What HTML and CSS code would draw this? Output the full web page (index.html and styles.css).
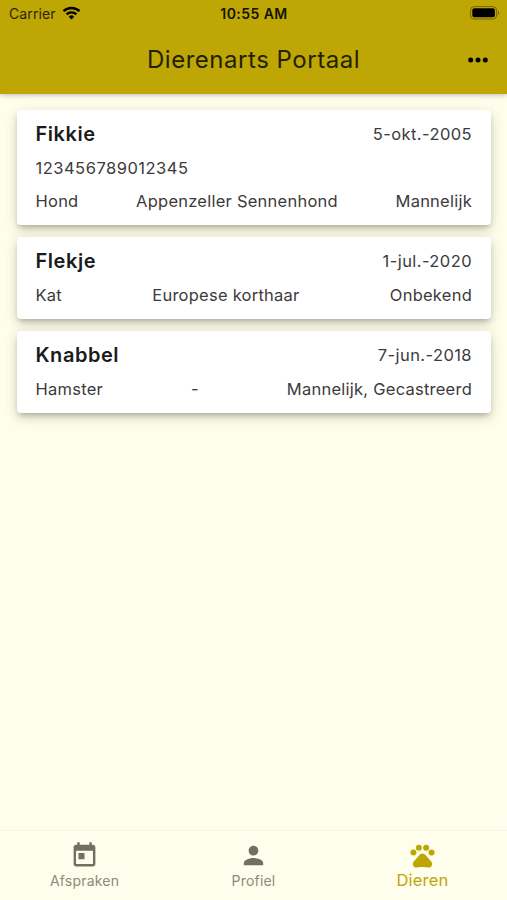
FILE: index.html
```
<!DOCTYPE html>
<html lang="nl">
<head>
<meta charset="utf-8">
<meta name="viewport" content="width=device-width">
<title>Dierenarts Portaal</title>
<link rel="stylesheet" href="styles.css">
</head>
<body>
<div class="app">
  <header class="header">
    <div class="status">
      <div class="carrier"><span>Carrier</span>
        <svg class="wifi" viewBox="0 0 18 14" fill="none" stroke="#000"><path d="M1 5.2a11.5 11.5 0 0 1 16 0" stroke-width="2.5"/><path d="M4.1 8.4a7 7 0 0 1 9.8 0" stroke-width="2.4"/><path d="M9 13.4 6.3 10.7a3.8 3.8 0 0 1 5.4 0z" fill="#000" stroke="none"/></svg>
      </div>
      <div class="clock">10:55 AM</div>
      <svg class="battery" viewBox="0 0 30 14"><rect x=".6" y=".6" width="26" height="12.4" rx="3.6" fill="none" stroke="#000" stroke-opacity=".38"/><rect x="2.3" y="2.3" width="22.6" height="9" rx="2" /><path d="M28 4.6q2 2.2 0 4.4z" fill-opacity=".45"/></svg>
    </div>
    <div class="toolbar">
      <h1 class="title">Dierenarts Portaal</h1>
      <svg class="more" viewBox="0 0 20 6"><circle cx="2.7" cy="3" r="2.5"/><circle cx="10" cy="3" r="2.5"/><circle cx="17.3" cy="3" r="2.5"/></svg>
    </div>
  </header>
  <main class="list">
    <article class="card">
      <div class="row top"><h2 class="name">Fikkie</h2><span class="date">5-okt.-2005</span></div>
      <div class="row chip"><span class="number">123456789012345</span></div>
      <div class="row"><span>Hond</span><span>Appenzeller Sennenhond</span><span>Mannelijk</span></div>
    </article>
    <article class="card">
      <div class="row top"><h2 class="name">Flekje</h2><span class="date">1-jul.-2020</span></div>
      <div class="row"><span>Kat</span><span>Europese korthaar</span><span>Onbekend</span></div>
    </article>
    <article class="card">
      <div class="row top"><h2 class="name">Knabbel</h2><span class="date">7-jun.-2018</span></div>
      <div class="row"><span>Hamster</span><span>-</span><span>Mannelijk, Gecastreerd</span></div>
    </article>
  </main>
  <nav class="nav">
    <a class="tab"><svg class="icon" viewBox="0 0 24 24"><path d="M19 3h-1V1h-2v2H8V1H6v2H5c-1.11 0-1.99.9-1.99 2L3 19c0 1.1.89 2 2 2h14c1.1 0 2-.9 2-2V5c0-1.1-.9-2-2-2zm0 16H5V8h14v11zM7 10h5v5H7z"/></svg><span>Afspraken</span></a>
    <a class="tab"><svg class="icon" viewBox="0 0 24 24"><path d="M12 12c2.21 0 4-1.79 4-4s-1.79-4-4-4-4 1.79-4 4 1.79 4 4 4zm0 2c-2.67 0-8 1.34-8 4v2h16v-2c0-2.66-5.33-4-8-4z"/></svg><span>Profiel</span></a>
    <a class="tab active"><svg class="icon" viewBox="0 0 24 24"><circle cx="4.5" cy="9.5" r="2.5"/><circle cx="9" cy="5.5" r="2.5"/><circle cx="15" cy="5.5" r="2.5"/><circle cx="19.5" cy="9.5" r="2.5"/><path d="M17.34 14.86c-.87-1.02-1.6-1.89-2.48-2.91-.46-.54-1.05-1.08-1.75-1.32-.11-.04-.22-.07-.33-.09-.25-.04-.52-.04-.78-.04s-.53 0-.79.05c-.11.02-.22.05-.33.09-.7.24-1.28.78-1.75 1.32-.87 1.02-1.6 1.89-2.48 2.91-1.31 1.31-2.92 2.76-2.62 4.79.29 1.02 1.02 2.03 2.33 2.32.73.15 3.06-.44 5.54-.44h.18c2.48 0 4.81.58 5.54.44 1.31-.29 2.04-1.31 2.33-2.32.31-2.04-1.3-3.49-2.61-4.8z"/></svg><span>Dieren</span></a>
  </nav>
</div>
</body>
</html>
```
FILE: styles.css
```
* { box-sizing: border-box; }
body { margin: 0; font-family: Inter, "Liberation Sans", sans-serif; color: #3b3b3b; }
.app { display: flex; flex-direction: column; height: 900px; background: #fffdec; overflow: hidden; }
.header { height: 94px; background: #bea605; box-shadow: 0 1px 5px rgba(0, 0, 0, .26); }
.status { display: grid; grid-template-columns: 1fr auto 1fr; align-items: center; height: 27px; padding: 0 7px 0 9px; font-size: 14px; color: #151200; }
.carrier { display: flex; align-items: center; gap: 6px; letter-spacing: .1px; color: #2b2500; }
.wifi { width: 19px; height: 14px; margin-top: -2px; }
.clock { font-size: 14px; font-weight: 600; letter-spacing: .45px; margin-right: 1px; }
.battery { width: 30px; height: 14px; justify-self: end; margin-top: -1px; }
.toolbar { display: grid; grid-template-columns: 1fr auto 1fr; align-items: center; height: 66px; padding: 0 19px; }
.title { grid-column: 2; margin: 0; font-size: 24px; font-weight: 400; line-height: 30px; letter-spacing: .52px; color: #241f00; }
.more { width: 20px; height: 6px; justify-self: end; margin-top: -1px; }
.list { flex: 1; display: flex; flex-direction: column; gap: 12px; padding: 16px 16px 0 17px; }
.card { background: #fff; border-radius: 4px; padding: 9px 19px 10px 18.5px; box-shadow: 0 4px 5px -2px rgba(40, 50, 30, .24), 0 4px 12px rgba(70, 75, 40, .26); }
.row { display: flex; justify-content: space-between; align-items: center; height: 28px; font-size: 16.5px; line-height: 28px; letter-spacing: .24px; white-space: nowrap; }
.top { height: 30px; margin-bottom: 5px; }
.chip { margin-bottom: 5px; }
.number { letter-spacing: .5px; }
.date { letter-spacing: .42px; }
.name { margin: 0; font-size: 20px; font-weight: 600; letter-spacing: .55px; color: #1b1b1b; }
.nav { display: grid; grid-template-columns: repeat(3, 1fr); height: 70px; border-top: 1px solid #f6f5e5; }
.tab { display: flex; flex-direction: column; align-items: center; padding-top: 10px; font-size: 14px; line-height: 20px; letter-spacing: .2px; color: #8b8b7d; }
.icon { width: 29px; height: 29px; fill: #707063; }
.tab span { margin-top: 1px; }
.active { color: #bea605; font-size: 16.5px; }
.active .icon { fill: #bea605; }
.active span { margin-top: 0; }
```
